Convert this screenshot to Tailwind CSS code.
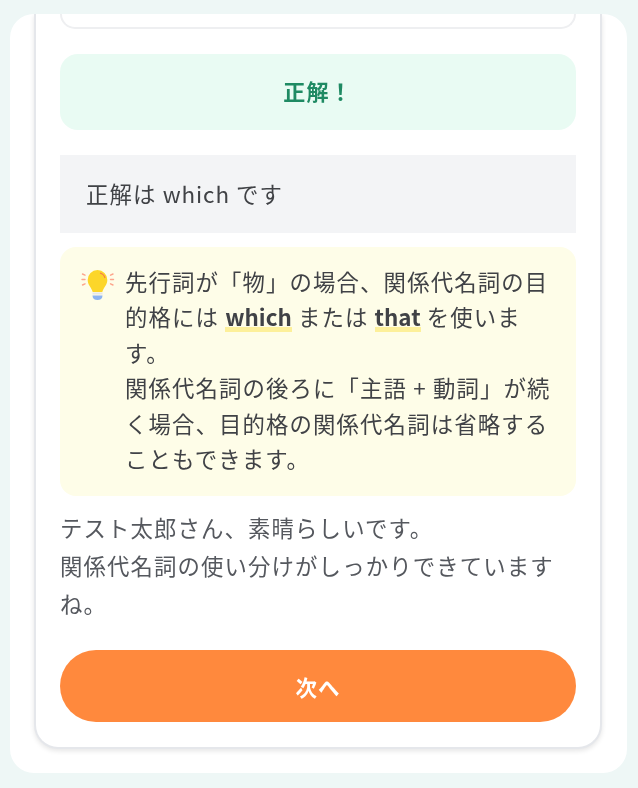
<!DOCTYPE html>
<html lang="ja">
<head>
<meta charset="utf-8">
<script src="https://cdn.jsdelivr.net/npm/@tailwindcss/browser@4"></script>
</head>
<body class="bg-[#eef7f6] font-['Noto_Sans_CJK_JP',sans-serif]">
<div class="w-[638px] h-[788px] pt-[14px] pb-[15px] pl-[10px] pr-[11px] overflow-hidden blur-[0.35px]">
  <div class="h-full bg-white rounded-[24px] overflow-hidden flex flex-col justify-end pl-[23.5px] pr-[25px] pb-[24px]">
    <div class="bg-white border-x-2 border-b-2 border-[#e5e7eb] rounded-b-[24px] shadow-[0_2px_5px_rgba(0,0,0,0.1)] pl-[24.5px] pr-[24px] pb-[25px] flex flex-col">
      <div class="h-[15px] border-x-2 border-b-2 border-[#eeeff1] rounded-b-[20px]"></div>
      <div class="mt-[25px] h-[76px] rounded-[18px] bg-[#e9fbf3] flex items-center justify-center pb-[3px] text-[22px] font-bold tracking-[0.05em] text-[#1f8a63]">正解！</div>
      <div class="mt-[25px] h-[78px] bg-[#f3f4f6] flex items-center px-[26px] text-[22.4px] tracking-[0.05em] text-[#404246]"><span>正解は <span class="tracking-[0.04em]">which</span> です</span></div>
      <div class="mt-[14px] h-[249px] rounded-[16px] bg-[#fefde8] pl-[20px] pr-[24px] pt-[16.5px] flex gap-[9px] text-[22.4px] leading-[35.6px] tracking-[0.05em] text-[#404246]">
        <svg class="w-[36px] h-[36px] shrink-0 mt-[6px]" viewBox="0 0 36 36" aria-hidden="true">
          <g stroke="#fda58c" stroke-width="1.4" stroke-linecap="round" fill="none">
            <path d="M2.500 4l2.500 1.200M2 9.500H5M2.500 15l2.500-1.200M33 4l-2.500 1.200M33.500 9.500h-3M33 15l-2.500-1.200"/>
          </g>
          <path d="M17.500 0a9.800 9.800 0 0 0-9.800 10c0 5 3.500 7 5 12h9.600c1.500-5 5-7 5-12a9.800 9.800 0 0 0-9.800-10z" fill="#fcd62a"/>
          <path d="M20 3a7 7 0 0 1 5 5" stroke="#f77d4b" stroke-width="1.200" fill="none"/>
          <path d="M12.500 22.500h10v2h-10z" fill="#e5e7eb"/>
          <path d="M12.500 25.500h10c0 3-2 4.500-5 4.500s-5-1.500-5-4.500z" fill="#8db4f2"/>
        </svg>
        <p class="min-w-0">先行詞が「物」の場合、関係代名詞の目的格には <strong class="font-bold tracking-normal bg-[linear-gradient(transparent_85%,#fdf09a_85%)]">which</strong> または <strong class="font-bold tracking-normal bg-[linear-gradient(transparent_85%,#fdf09a_85%)]">that</strong> を使います。<br>関係代名詞の後ろに「主語 + 動詞」が続く場合、目的格の関係代名詞は省略することもできます。</p>
      </div>
      <p class="mt-[12px] text-[22.4px] leading-[38px] tracking-[0.05em] text-[#55585e]">テスト太郎さん、素晴らしいです。<br>関係代名詞の使い分けがしっかりできていますね。</p>
      <button class="mt-[28px] h-[72px] rounded-full bg-[#ff893d] pt-[3px] text-white text-[21.5px] font-bold tracking-[0.05em]">次へ</button>
    </div>
  </div>
</div>
</body>
</html>
